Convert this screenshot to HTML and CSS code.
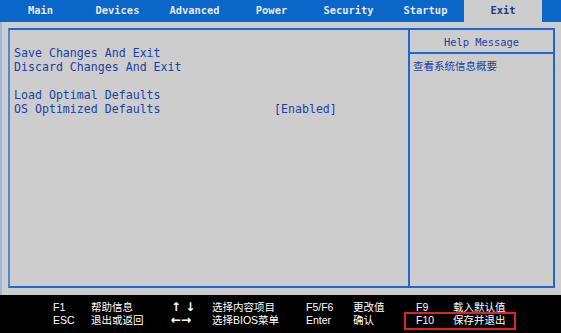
FILE: index.html
```html
<!DOCTYPE html>
<html lang="zh-CN">
<head>
    <meta charset="UTF-8">
    <title>BIOS Setup - Exit</title>
    <link rel="stylesheet" href="styles.css">
</head>
<body>
    <div class="tabs">
        <div class="tab">Main</div>
        <div class="tab">Devices</div>
        <div class="tab">Advanced</div>
        <div class="tab">Power</div>
        <div class="tab">Security</div>
        <div class="tab">Startup</div>
        <div class="tab active">Exit</div>
    </div>

    <div class="main">
        <div class="frame">
            <div class="items">
                <div class="item">Save Changes And Exit</div>
                <div class="item">Discard Changes And Exit</div>
                <div class="item gap"></div>
                <div class="item">Load Optimal Defaults</div>
                <div class="item">
                    <span class="label">OS Optimized Defaults</span>
                    <span class="value">[Enabled]</span>
                </div>
            </div>
            <div class="help">
                <div class="help-title">Help Message</div>
                <div class="help-text">查看系统信息概要</div>
            </div>
        </div>
    </div>

    <div class="footer">
        <div class="keys">
            <span class="key">F1</span><span>帮助信息</span>
            <span class="key arrow">↑ ↓</span><span>选择内容项目</span>
            <span class="key">F5/F6</span><span>更改值</span>
            <span class="key">F9</span><span>载入默认值</span>

            <span class="key">ESC</span><span>退出或返回</span>
            <span class="key arrow">←→</span><span>选择BIOS菜单</span>
            <span class="key">Enter</span><span>确认</span>
            <span class="key">F10</span><span>保存并退出</span>
        </div>
        <div class="mark"></div>
    </div>
</body>
</html>
```

FILE: styles.css
```css
body {
    margin: 0;
    width: 561px;
    height: 333px;
    background: #cdcdcd;
    overflow: hidden;
    font-family: "DejaVu Sans Mono", "Noto Sans CJK SC", monospace;
}

.tabs {
    display: flex;
    height: 22px;
    padding-left: 2px;
    background: #0a66c8;
}

.tab {
    width: 77px;
    text-align: center;
    line-height: 21px;
    font-size: 10.4px;
    font-weight: bold;
    color: #e4e8f0;
}

.tab.active {
    width: 78px;
    background: #cdcdcd;
    color: #1a3a8c;
}

.main {
    height: 273px;
    border-left: 2px solid #9fb6d6;
    padding: 6px 6px 0 6px;
    box-sizing: border-box;
}

.frame {
    display: flex;
    width: 547px;
    height: 260px;
    box-sizing: border-box;
    border: 2px solid #1f66d6;
    border-left-color: #4f86d6;
}

.items {
    width: 398px;
    padding: 16px 0 0 4px;
    box-sizing: border-box;
    font-size: 11.6px;
    line-height: 14px;
    color: #1d3f9e;
}

.item {
    display: flex;
    height: 14px;
}

.item.gap {
    height: 14px;
}

.label {
    width: 260px;
}

.help {
    flex: 1;
    border-left: 2px solid #1f66d6;
}

.help-title {
    height: 22px;
    line-height: 24px;
    border-bottom: 2px solid #1f66d6;
    text-align: center;
    font-size: 10.4px;
    color: #1d3f9e;
}

.help-text {
    padding: 5px 0 0 3px;
    font-family: "Noto Sans CJK SC", sans-serif;
    font-size: 10.5px;
    line-height: 14px;
    color: #1d3f9e;
}

.footer {
    position: relative;
    height: 38px;
    background: #000;
    color: #fff;
}

.keys {
    display: grid;
    grid-template-columns: 38px 80px 41px 94px 47px 63px 37px auto;
    padding: 6px 0 0 53px;
    font-family: "Liberation Sans", "Noto Sans CJK SC", sans-serif;
    font-size: 10.5px;
    line-height: 13px;
}

.keys span {
    white-space: nowrap;
}

.keys .arrow {
    font-family: "DejaVu Sans", sans-serif;
    font-size: 12px;
    font-weight: bold;
}

.mark {
    position: absolute;
    left: 404px;
    top: 17px;
    width: 112px;
    height: 18px;
    box-sizing: border-box;
    border: 2px solid #e02424;
}
```
